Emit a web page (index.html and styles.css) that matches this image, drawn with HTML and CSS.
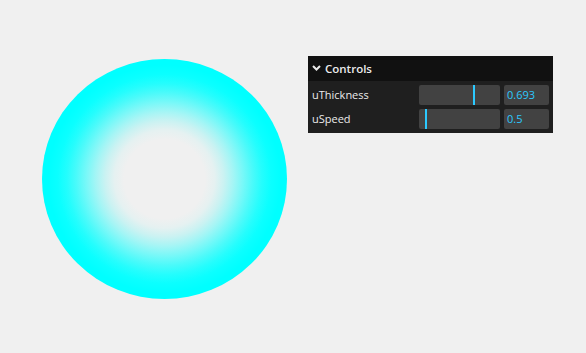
FILE: index.html
```html
<!DOCTYPE html>
<html>
<head>
<meta charset="utf-8">
<link rel="stylesheet" href="styles.css">
</head>
<body>
<div class="stage">
  <div class="orb"></div>
  <div class="gui">
    <div class="title">
      <svg class="chev" width="9" height="6" viewBox="0 0 9 6"><path d="M1 1 L4.5 4.5 L8 1" fill="none" stroke="#ebebeb" stroke-width="2"/></svg>
      <span>Controls</span>
    </div>
    <div class="children">
      <div class="controller">
        <div class="name">uThickness</div>
        <div class="widget">
          <div class="slider"><div class="fill" style="width: 69.3%"></div></div>
          <div class="num">0.693</div>
        </div>
      </div>
      <div class="controller">
        <div class="name">uSpeed</div>
        <div class="widget">
          <div class="slider"><div class="fill" style="width: 10%"></div></div>
          <div class="num">0.5</div>
        </div>
      </div>
    </div>
  </div>
</div>
</body>
</html>
```
FILE: styles.css
```css
html, body {
  margin: 0;
  padding: 0;
  background: #f0f0f0;
}
.stage {
  display: flex;
  align-items: flex-start;
  padding: 56px 0 0 42px;
}
.orb {
  width: 245px;
  height: 240px;
  margin-top: 3px;
  border-radius: 50%;
  background: radial-gradient(closest-side, #f0f0f0 0%, #f0f0f0 33%, #e5f1f1 41%, #caf2f2 48.5%, #a5f5f5 56%, #78f8f8 64%, #4bfafa 72%, #25fdfd 79.5%, #0bffff 87%, #00ffff 95%, #00ffff 100%);
}
.gui {
  width: 245px;
  margin-left: 21px;
  background: #1f1f1f;
  color: #ebebeb;
  font-family: "Open Sans", "Noto Sans", sans-serif;
  font-size: 11px;
}
.title {
  height: 25px;
  box-sizing: border-box;
  padding: 0 4px 1px;
  background: #111111;
  display: flex;
  align-items: center;
  font-weight: 600;
  font-size: 11.5px;
}
.chev {
  margin: 0 4px 0 0;
}
.children {
  padding: 4px 0;
  display: flex;
  flex-direction: column;
  gap: 4px;
}
.controller {
  display: flex;
  align-items: center;
  height: 20px;
  padding: 0 4px;
}
.name {
  width: 45%;
  flex-shrink: 0;
  padding: 0 4px 2px 0;
  box-sizing: border-box;
  white-space: nowrap;
}
.widget {
  flex: 1;
  display: flex;
  height: 20px;
  gap: 4px;
}
.slider {
  flex: 1;
  background: #424242;
  border-radius: 2px;
  overflow: hidden;
}
.fill {
  height: 100%;
  box-sizing: border-box;
  border-right: 2px solid #2cc9ff;
}
.num {
  width: 45px;
  box-sizing: border-box;
  background: #424242;
  border-radius: 2px;
  color: #2cc9ff;
  padding-left: 3px;
  line-height: 19px;
}
```
